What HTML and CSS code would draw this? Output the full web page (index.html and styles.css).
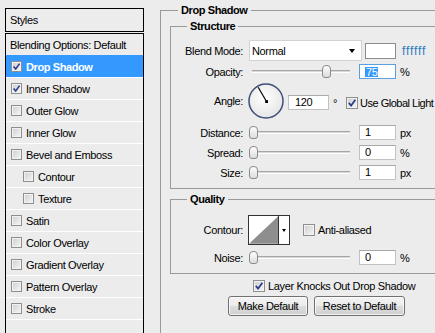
FILE: index.html
```html
<!DOCTYPE html>
<html>
<head>
<meta charset="utf-8">
<title>Layer Style</title>
<link rel="stylesheet" href="styles.css">
</head>
<body>
<div class="dialog">
  <div class="side">
    <div class="side-head">Styles</div>
    <ul class="style-list">
      <li class="item first">Blending Options: Default</li>
      <li class="item sel"><span class="cb small"><svg viewBox="0 0 9 9" width="9" height="9"><path d="M1.6 4.4 3.7 6.9 7.6 1.6" fill="none" stroke="#2d3b8c" stroke-width="1.6"/></svg></span>Drop Shadow</li>
      <li class="item"><span class="cb small"><svg viewBox="0 0 9 9" width="9" height="9"><path d="M1.6 4.4 3.7 6.9 7.6 1.6" fill="none" stroke="#2d3b8c" stroke-width="1.6"/></svg></span>Inner Shadow</li>
      <li class="item"><span class="cb small"></span>Outer Glow</li>
      <li class="item"><span class="cb small"></span>Inner Glow</li>
      <li class="item"><span class="cb small"></span>Bevel and Emboss</li>
      <li class="item sub"><span class="cb small"></span>Contour</li>
      <li class="item sub"><span class="cb small"></span>Texture</li>
      <li class="item"><span class="cb small"></span>Satin</li>
      <li class="item"><span class="cb small"></span>Color Overlay</li>
      <li class="item"><span class="cb small"></span>Gradient Overlay</li>
      <li class="item"><span class="cb small"></span>Pattern Overlay</li>
      <li class="item"><span class="cb small"></span>Stroke</li>
      <li class="item end"></li>
    </ul>
  </div>

  <fieldset class="group outer">
    <legend>Drop Shadow</legend>

    <fieldset class="group inner">
      <legend>Structure</legend>
      <div class="row r-blend">
        <span class="lbl">Blend Mode:</span>
        <div class="select"><span>Normal</span><i class="arrow"></i></div>
        <span class="swatch"></span>
        <span class="hex">ffffff</span>
      </div>
      <div class="row r-op">
        <span class="lbl">Opacity:</span>
        <div class="slider"><div class="track"></div><span class="thumb" style="left:73px"></span></div>
        <span class="num focus"><span class="hl">75</span></span>
        <span class="unit">%</span>
      </div>
      <div class="row r-angle">
        <span class="lbl">Angle:</span>
        <svg class="dial" viewBox="0 0 36 36" width="36" height="36">
          <defs>
            <radialGradient id="dg" cx="45%" cy="40%" r="60%">
              <stop offset="0" stop-color="#ffffff"/>
              <stop offset="1" stop-color="#e6e6e6"/>
            </radialGradient>
          </defs>
          <circle cx="18" cy="18" r="17" fill="url(#dg)" stroke="#3f4f78" stroke-width="1.5"/>
          <line x1="18.5" y1="18.5" x2="10.2" y2="4.3" stroke="#000" stroke-width="1.2"/>
          <rect x="17.2" y="17.2" width="2.8" height="2.8" fill="#000"/>
        </svg>
        <div class="angle-ctl">
          <span class="num wide">120</span>
          <span class="deg">°</span>
          <span class="chk-label gl"><span class="cb"><svg viewBox="0 0 10 10" width="10" height="10"><path d="M1.8 4.9 4.1 7.6 8.4 1.8" fill="none" stroke="#2d3b8c" stroke-width="1.7"/></svg></span>Use Global Light</span>
        </div>
      </div>
      <div class="row r-dist">
        <span class="lbl">Distance:</span>
        <div class="slider"><div class="track"></div><span class="thumb" style="left:0"></span></div>
        <span class="num">1</span>
        <span class="unit">px</span>
      </div>
      <div class="row r-next">
        <span class="lbl">Spread:</span>
        <div class="slider"><div class="track"></div><span class="thumb" style="left:0"></span></div>
        <span class="num">0</span>
        <span class="unit">%</span>
      </div>
      <div class="row r-next">
        <span class="lbl">Size:</span>
        <div class="slider"><div class="track"></div><span class="thumb" style="left:0"></span></div>
        <span class="num">1</span>
        <span class="unit">px</span>
      </div>
    </fieldset>

    <fieldset class="group inner quality">
      <legend>Quality</legend>
      <div class="row r-contour">
        <span class="lbl">Contour:</span>
        <div class="contour">
          <svg viewBox="0 0 30 28" width="30" height="28"><rect width="30" height="28" fill="#fff"/><path d="M0 28 30 0 30 28Z" fill="#8e8e8e"/></svg>
          <span class="c-arrow"><i class="arrow"></i></span>
        </div>
        <span class="chk-label aa"><span class="cb"></span>Anti-aliased</span>
      </div>
      <div class="row r-noise">
        <span class="lbl">Noise:</span>
        <div class="slider"><div class="track"></div><span class="thumb" style="left:0"></span></div>
        <span class="num">0</span>
        <span class="unit">%</span>
      </div>
    </fieldset>

    <div class="knock chk-label"><span class="cb"><svg viewBox="0 0 10 10" width="10" height="10"><path d="M1.8 4.9 4.1 7.6 8.4 1.8" fill="none" stroke="#2d3b8c" stroke-width="1.7"/></svg></span>Layer Knocks Out Drop Shadow</div>
    <div class="buttons">
      <button class="btn make">Make Default</button>
      <button class="btn reset">Reset to Default</button>
    </div>
  </fieldset>
</div>
</body>
</html>
```
FILE: styles.css
```css
html, body {
  margin: 0;
  padding: 0;
  width: 435px;
  height: 333px;
  overflow: hidden;
  background: #ececec;
}
body {
  font: 11px "Liberation Sans", Arial, sans-serif;
  letter-spacing: -0.35px;
  color: #000;
}
.dialog {
  display: flex;
  align-items: flex-start;
}

/* left list */
.side {
  width: 139px;
  margin: 8px 0 0 5px;
  flex: none;
}
.side-head {
  border: 1px solid #000;
  height: 22px;
  line-height: 22px;
  padding-left: 4px;
}
.style-list {
  list-style: none;
  margin: 1px 0 0;
  padding: 0;
  border: 1px solid #000;
  border-bottom: 0;
  height: 330px;
}
.item {
  height: 21px;
  display: flex;
  align-items: center;
  gap: 4px;
  padding-left: 5px;
  border-top: 1px solid #fff;
  white-space: nowrap;
}
.item.first {
  border-top: 0;
  padding-left: 4px;
}
.item.sub {
  padding-left: 17px;
}
.item.sel {
  background: #3399ff;
  border-top-color: #3399ff;
  color: #fff;
  font-weight: bold;
  letter-spacing: -0.4px;
}
.item.end {
  height: 0;
}

/* checkbox */
.cb {
  width: 12px;
  height: 12px;
  box-sizing: border-box;
  border: 1px solid #8e8f8f;
  background: linear-gradient(135deg, #cdcdcd, #f7f7f7);
  box-shadow: inset 0 0 0 1px #f2f2f2;
  display: inline-flex;
  align-items: center;
  justify-content: center;
  flex: none;
}
.cb.small {
  width: 11px;
  height: 11px;
}
.cb svg {
  display: block;
}

/* fieldsets */
.group {
  margin: 0;
  border: 1px solid #999;
  padding: 0;
  min-width: 0;
}
.group > legend {
  font-weight: bold;
  letter-spacing: -0.4px;
  padding: 0 3px;
  height: 15px;
  line-height: 15px;
}
.outer {
  flex: none;
  box-sizing: border-box;
  width: 300px;
  height: 345px;
  margin: 3px 0 0 16px;
  padding: 1px 0 0 9px;
}
.outer > legend {
  margin-left: 8px;
}
.inner {
  padding: 6px 0 8px 0;
}
.inner > legend {
  margin-left: 16px;
}
.quality {
  margin-top: 3px;
  padding-top: 8px;
}

/* rows */
.row {
  display: flex;
  align-items: center;
  white-space: nowrap;
}
.lbl {
  width: 72px;
  text-align: right;
  margin-right: 6px;
  flex: none;
}
.r-blend { height: 21px; }
.r-op { height: 15px; margin-top: 3px; }
.r-angle { height: 36px; margin-top: 4px; }
.r-dist { height: 15px; margin-top: 6px; }
.r-next { height: 15px; margin-top: 5px; }
.r-contour { height: 30px; }
.r-noise { height: 15px; margin-top: 5px; }

.select {
  width: 113px;
  height: 21px;
  box-sizing: border-box;
  background: #fff;
  border: 1px solid #d2d2d2;
  display: flex;
  align-items: center;
  padding: 0 6px 0 2px;
  flex: none;
}
.arrow {
  display: block;
  width: 0;
  height: 0;
  border-left: 3px solid transparent;
  border-right: 3px solid transparent;
  border-top: 4px solid #000;
}
.select .arrow {
  margin-left: auto;
}
.swatch {
  width: 31px;
  height: 16px;
  box-sizing: border-box;
  border: 1px solid #8c8c8c;
  background: #fff;
  margin-left: 3px;
  flex: none;
}
.hex {
  margin-left: 6px;
  color: #2a7abd;
  font-size: 12px;
  letter-spacing: 0.9px;
}

.slider {
  position: relative;
  width: 104px;
  height: 15px;
  flex: none;
}
.track {
  margin: 6px 3px 0;
  height: 1px;
  border-top: 1px solid #a6a6a6;
  border-bottom: 1px solid #fff;
  background: #d8d8d8;
}
.thumb {
  position: absolute;
  top: 1px;
  width: 9px;
  height: 13px;
  box-sizing: border-box;
  border: 1px solid #8b8b8b;
  border-radius: 4px 4px 3px 3px;
  background: linear-gradient(#fdfdfd, #dcdcdc);
}

.num {
  width: 37px;
  height: 15px;
  box-sizing: border-box;
  margin-left: 6px;
  padding-left: 5px;
  border: 1px solid #c2c2c2;
  border-top-color: #a9a9a9;
  background: #fff;
  line-height: 13px;
  flex: none;
}
.num.focus {
  border-color: #5a9fe0;
  display: flex;
  align-items: center;
}
.hl {
  background: #3399ff;
  color: #fff;
  line-height: 10px;
  height: 10px;
  padding: 0 0 0 1px;
}
.num.wide {
  width: 41px;
  margin-left: 4px;
  padding-left: 6px;
}
.unit {
  margin-left: 4px;
}

.dial {
  display: block;
  margin-left: -1px;
  flex: none;
}
.angle-ctl {
  display: flex;
  align-items: center;
  height: 15px;
  align-self: flex-start;
  margin-top: 12px;
}
.deg {
  margin-left: 4px;
}
.chk-label {
  display: flex;
  align-items: center;
  gap: 3px;
  white-space: nowrap;
}
.gl {
  margin-left: 9px;
  gap: 2px;
  letter-spacing: -0.5px;
}

.contour {
  width: 42px;
  height: 30px;
  box-sizing: border-box;
  border: 1px solid #333;
  margin-left: -1px;
  display: flex;
  background: #fff;
  flex: none;
}
.contour svg {
  display: block;
}
.c-arrow {
  width: 10px;
  border-left: 1px solid #333;
  display: flex;
  align-items: center;
  justify-content: center;
  background: #fdfdfd;
}
.c-arrow .arrow {
  border-left-width: 2.5px;
  border-right-width: 2.5px;
  border-top-width: 3px;
}
.aa {
  margin-left: 13px;
}

.knock {
  margin: 6px 0 0 83px;
  height: 12px;
}
.buttons {
  display: flex;
  gap: 6px;
  margin: 4px 0 0 58px;
}
.btn {
  height: 20px;
  box-sizing: border-box;
  padding: 0;
  border: 1px solid #707070;
  border-radius: 3px;
  background: linear-gradient(#f3f3f3 0%, #ebebeb 48%, #dddddd 52%, #cfcfcf 100%);
  box-shadow: inset 0 0 0 1px rgba(255, 255, 255, 0.75);
  font: inherit;
  letter-spacing: inherit;
  color: #000;
}
.btn.make { width: 80px; }
.btn.reset { width: 91px; }
```
